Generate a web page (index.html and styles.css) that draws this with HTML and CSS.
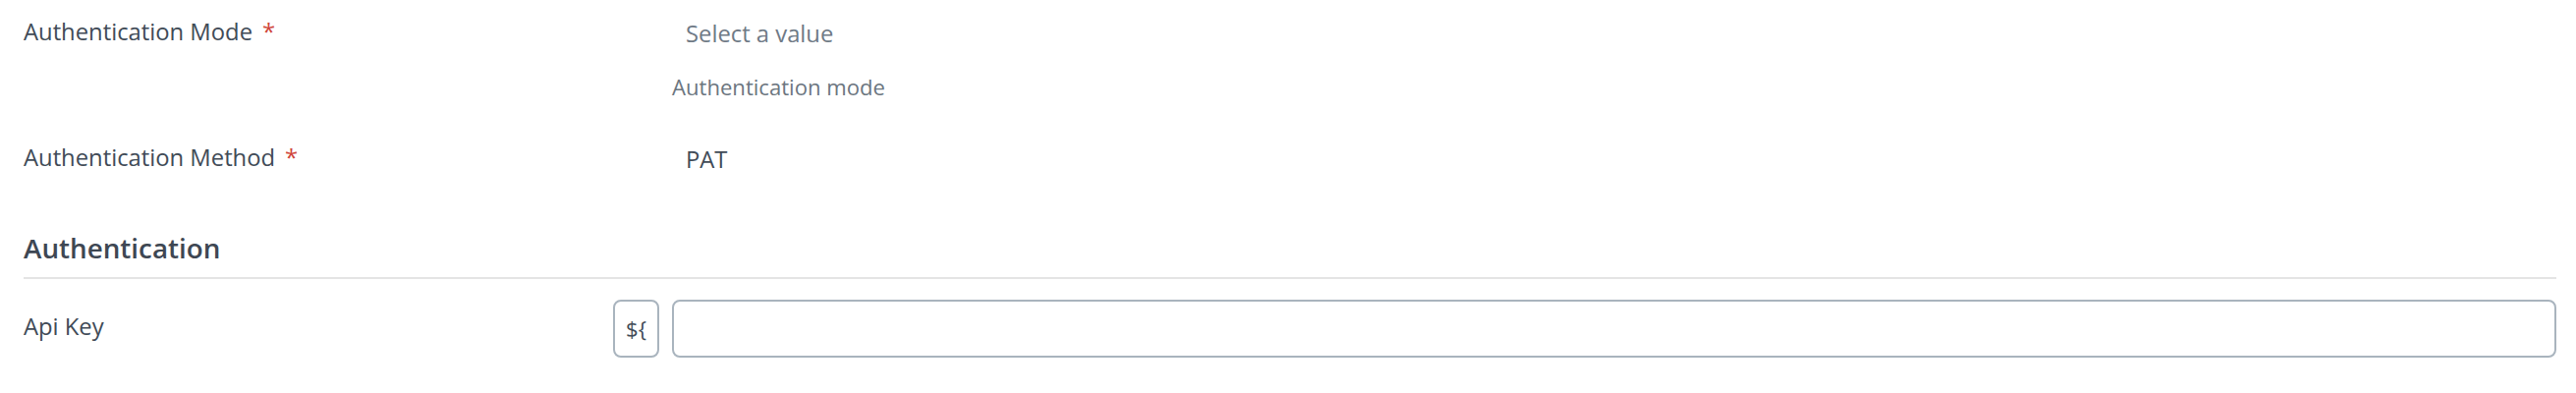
FILE: index.html
```html
<!DOCTYPE html>
<html lang="en">
<head>
<meta charset="utf-8">
<title>Authentication</title>
<link rel="stylesheet" href="styles.css">
</head>
<body>
<div class="page">
  <div class="field">
    <div class="label">Authentication Mode<span class="req">*</span></div>
    <div class="control offset">
      <div class="select placeholder">Select a value</div>
      <div class="help">Authentication mode</div>
    </div>
  </div>

  <div class="field field-method">
    <div class="label">Authentication Method<span class="req">*</span></div>
    <div class="control offset">
      <div class="select">PAT</div>
    </div>
  </div>

  <h2 class="section-title">Authentication</h2>

  <div class="field">
    <div class="label">Api Key</div>
    <div class="control">
      <div class="input-row">
        <button class="expr-btn" type="button">${</button>
        <input class="text-input" type="text" aria-label="Api Key">
      </div>
    </div>
  </div>
</div>
</body>
</html>
```

FILE: styles.css
```css
* {
  box-sizing: border-box;
}

html, body {
  margin: 0;
  padding: 0;
  background: #ffffff;
}

body {
  font-family: "Open Sans", "Noto Sans", "Liberation Sans", sans-serif;
  color: #414b57;
}

.page {
  padding: 4px 20px 0 24px;
}

.field {
  display: grid;
  grid-template-columns: 600px 1fr;
  align-items: start;
}

.field-method {
  margin-top: 28px;
}

.label {
  font-size: 23.8px;
  line-height: 1.5;
  padding-top: 10.5px;
  color: #414b57;
}

.req {
  color: #d0453a;
  margin-left: 10px;
}

.control.offset {
  padding-left: 60px;
}

.select {
  height: 59px;
  display: flex;
  align-items: center;
  padding: 0 14px;
  font-size: 23.8px;
  color: #414b57;
}

.select.placeholder {
  color: #6f7a86;
}

.help {
  margin-top: 8.5px;
  font-size: 22.1px;
  line-height: 1.5;
  color: #6c7680;
}

.section-title {
  margin: 44px 0 0 0;
  padding-bottom: 13px;
  border-bottom: 2px solid #e4e4e4;
  font-size: 27.8px;
  line-height: 1.2;
  font-weight: 600;
  color: #3e4753;
}

.section-title + .field {
  margin-top: 21px;
}

.input-row {
  display: flex;
  gap: 13px;
}

.expr-btn {
  width: 47px;
  height: 59px;
  flex: none;
  border: 2px solid #a9b4be;
  border-radius: 8px;
  background: #ffffff;
  font-family: "Open Sans", "Noto Sans", sans-serif;
  font-size: 22px;
  color: #414b57;
  padding: 0;
  display: flex;
  align-items: center;
  justify-content: center;
}

.text-input {
  flex: 1;
  min-width: 0;
  height: 59px;
  border: 2px solid #a9b4be;
  border-radius: 8px;
  background: #ffffff;
  font-family: "Open Sans", "Noto Sans", sans-serif;
  font-size: 23.8px;
  padding: 0 14px;
  outline: none;
}
```
